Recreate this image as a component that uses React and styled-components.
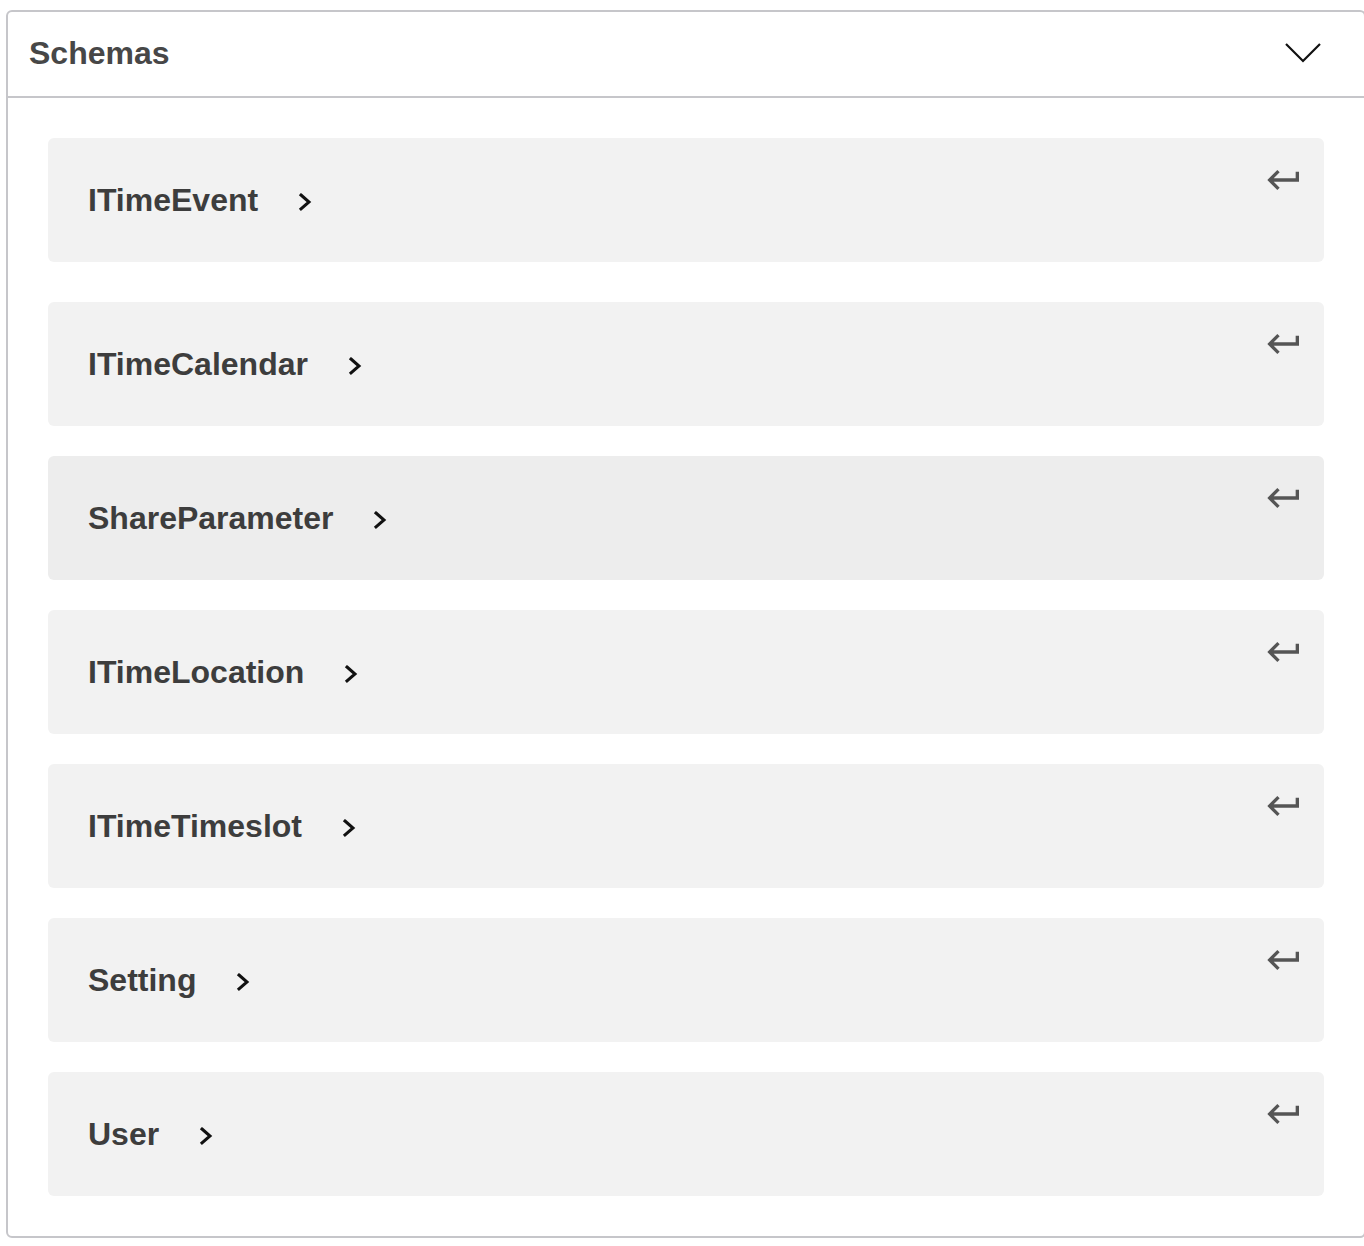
import React from "react";
import styled, { createGlobalStyle } from "styled-components";

const schemas = [
  { name: "ITimeEvent" },
  { name: "ITimeCalendar" },
  { name: "ShareParameter", hover: true },
  { name: "ITimeLocation" },
  { name: "ITimeTimeslot" },
  { name: "Setting" },
  { name: "User" },
];

const GlobalStyle = createGlobalStyle`
  html, body {
    margin: 0;
    padding: 0;
    background: #ffffff;
    overflow: hidden;
  }
  body {
    font-family: "Liberation Sans", Arial, Helvetica, sans-serif;
  }
`;

const ChevronDown = () => (
  <svg width="36" height="22" viewBox="0 0 36 22" fill="none">
    <polyline points="1,2 18,19 35,2" stroke="#111" strokeWidth="2.2" strokeLinejoin="miter" />
  </svg>
);

const ChevronRight = () => (
  <svg width="14" height="20" viewBox="0 0 14 20" fill="none">
    <polyline points="3,3 11,10 3,17" stroke="#111" strokeWidth="3" strokeLinecap="square" />
  </svg>
);

const JumpIcon = () => (
  <svg width="40" height="40" viewBox="0 0 24 24">
    <path
      d="M19 7v4H5.83l3.58-3.59L8 6l-6 6 6 6 1.41-1.41L5.83 13H21V7z"
      fill="#555"
    />
  </svg>
);

const App = () => {
  return (
    <>
      <GlobalStyle />
      <Section>
        <Header>
          <Title>Schemas</Title>
          <ChevronDown />
        </Header>
        <Body>
          {schemas.map((s, i) => (
            <Model key={s.name} $hover={s.hover} $first={i === 0}>
              <Name>{s.name}</Name>
              <Toggle>
                <ChevronRight />
              </Toggle>
              <Jump>
                <JumpIcon />
              </Jump>
            </Model>
          ))}
        </Body>
      </Section>
    </>
  );
};

const Section = styled.section`
  box-sizing: border-box;
  width: 1360px;
  margin: 10px 0 0 6px;
  border: 2px solid #c6c6ca;
  border-radius: 6px;
  background: #fff;
`;

const Header = styled.div`
  display: flex;
  align-items: center;
  justify-content: space-between;
  box-sizing: border-box;
  height: 86px;
  padding: 0 43px 2px 21px;
  border-bottom: 2px solid #c6c6ca;
`;

const Title = styled.h4`
  margin: 0;
  font-size: 32px;
  font-weight: 700;
  color: #474747;
`;

const Body = styled.div`
  display: flex;
  flex-direction: column;
  padding: 40px 40px 40px 40px;
`;

const Model = styled.div`
  display: flex;
  align-items: center;
  height: 124px;
  padding: 0 20px 0 40px;
  margin-bottom: ${(p) => (p.$first ? "40px" : "30px")};
  border-radius: 6px;
  background: ${(p) => (p.$hover ? "#ededed" : "#f2f2f2")};
  &:last-child {
    margin-bottom: 0;
  }
`;

const Name = styled.span`
  font-size: 32px;
  font-weight: 700;
  color: #3d3d3d;
`;

const Toggle = styled.span`
  display: flex;
  margin: 4px 0 0 40px;
`;

const Jump = styled.span`
  display: flex;
  align-self: flex-start;
  margin: 22px 0 0 auto;
`;

export default App;
